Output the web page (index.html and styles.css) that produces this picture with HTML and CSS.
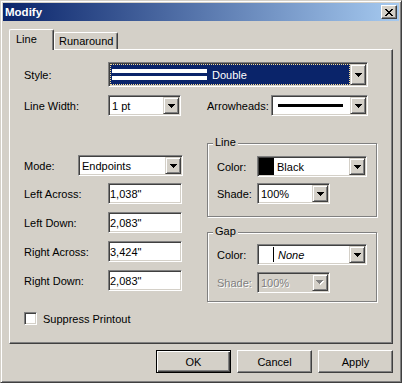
FILE: index.html
```html
<!DOCTYPE html>
<html lang="en">
<head>
    <meta charset="UTF-8">
    <meta name="viewport" content="width=device-width, initial-scale=1.0">
    <title>Modify</title>
    <link rel="stylesheet" href="styles.css">
</head>
<body>
    <div class="window">
        <div class="titlebar">
            <span class="title">Modify</span>
            <div class="close-btn">
                <svg width="8" height="7" viewBox="0 0 8 7"><path d="M0 0h2v1H0z M6 0h2v1H6z M1 1h2v1H1z M5 1h2v1H5z M2 2h4v1H2z M3 3h2v1H3z M2 4h4v1H2z M1 5h2v1H1z M5 5h2v1H5z M0 6h2v1H0z M6 6h2v1H6z" fill="#000"/></svg>
            </div>
        </div>

        <div class="content">
            <div class="tabs">
                <div class="tab active">Line</div>
                <div class="tab">Runaround</div>
            </div>

            <div class="panel">
                <div class="row row-style">
                    <span class="lbl lbl-84">Style:</span>
                    <div class="combo combo-tall w260">
                        <div class="combo-val focused">
                            <span class="double-line"><i></i><i></i></span>
                            <span class="val-text">Double</span>
                        </div>
                        <div class="drop"><svg width="7" height="4" viewBox="0 0 7 4"><path d="M0 0h7v1H0z M1 1h5v1H1z M2 2h3v1H2z M3 3h1v1H3z"/></svg></div>
                    </div>
                </div>

                <div class="row row-width">
                    <span class="lbl lbl-84">Line Width:</span>
                    <div class="combo w73">
                        <div class="combo-val">1 pt</div>
                        <div class="drop"><svg width="7" height="4" viewBox="0 0 7 4"><path d="M0 0h7v1H0z M1 1h5v1H1z M2 2h3v1H2z M3 3h1v1H3z"/></svg></div>
                    </div>
                    <span class="lbl lbl-arrow">Arrowheads:</span>
                    <div class="combo w97">
                        <div class="combo-val"><span class="arrow-line"></span></div>
                        <div class="drop"><svg width="7" height="4" viewBox="0 0 7 4"><path d="M0 0h7v1H0z M1 1h5v1H1z M2 2h3v1H2z M3 3h1v1H3z"/></svg></div>
                    </div>
                </div>

                <div class="lower">
                    <div class="col-left">
                        <div class="row row-mode">
                            <span class="lbl lbl-54">Mode:</span>
                            <div class="combo w105">
                                <div class="combo-val">Endpoints</div>
                                <div class="drop"><svg width="7" height="4" viewBox="0 0 7 4"><path d="M0 0h7v1H0z M1 1h5v1H1z M2 2h3v1H2z M3 3h1v1H3z"/></svg></div>
                            </div>
                        </div>
                        <div class="row">
                            <span class="lbl lbl-84">Left Across:</span>
                            <input class="field" type="text" value='1,038"'>
                        </div>
                        <div class="row">
                            <span class="lbl lbl-84">Left Down:</span>
                            <input class="field" type="text" value='2,083"'>
                        </div>
                        <div class="row">
                            <span class="lbl lbl-84">Right Across:</span>
                            <input class="field" type="text" value='3,424"'>
                        </div>
                        <div class="row">
                            <span class="lbl lbl-84">Right Down:</span>
                            <input class="field" type="text" value='2,083"'>
                        </div>
                    </div>

                    <div class="col-right">
                        <div class="group group-line">
                            <span class="legend">Line</span>
                            <div class="row">
                                <span class="lbl lbl-40">Color:</span>
                                <div class="combo w110">
                                    <div class="combo-val swatch-val">
                                        <span class="swatch black"></span>
                                        <span class="val-text">Black</span>
                                    </div>
                                    <div class="drop"><svg width="7" height="4" viewBox="0 0 7 4"><path d="M0 0h7v1H0z M1 1h5v1H1z M2 2h3v1H2z M3 3h1v1H3z"/></svg></div>
                                </div>
                            </div>
                            <div class="row">
                                <span class="lbl lbl-40">Shade:</span>
                                <div class="combo w73">
                                    <div class="combo-val">100%</div>
                                    <div class="drop"><svg width="7" height="4" viewBox="0 0 7 4"><path d="M0 0h7v1H0z M1 1h5v1H1z M2 2h3v1H2z M3 3h1v1H3z"/></svg></div>
                                </div>
                            </div>
                        </div>

                        <div class="group group-gap">
                            <span class="legend">Gap</span>
                            <div class="row">
                                <span class="lbl lbl-40">Color:</span>
                                <div class="combo w110">
                                    <div class="combo-val swatch-val">
                                        <span class="swatch none"></span>
                                        <span class="val-text none-text">None</span>
                                    </div>
                                    <div class="drop"><svg width="7" height="4" viewBox="0 0 7 4"><path d="M0 0h7v1H0z M1 1h5v1H1z M2 2h3v1H2z M3 3h1v1H3z"/></svg></div>
                                </div>
                            </div>
                            <div class="row">
                                <span class="lbl lbl-40 disabled">Shade:</span>
                                <div class="combo w73 combo-disabled">
                                    <div class="combo-val">100%</div>
                                    <div class="drop"><svg width="8" height="5" viewBox="0 0 8 5"><path d="M1 1h7v1H1z M2 2h5v1H2z M3 3h3v1H3z M4 4h1v1H4z" fill="#fff"/><path d="M0 0h7v1H0z M1 1h5v1H1z M2 2h3v1H2z M3 3h1v1H3z" fill="#808080"/></svg></div>
                                </div>
                            </div>
                        </div>
                    </div>
                </div>

                <div class="row row-check">
                    <span class="check"></span>
                    <span>Suppress Printout</span>
                </div>
            </div>

            <div class="buttons">
                <div class="btn default">OK</div>
                <div class="btn">Cancel</div>
                <div class="btn">Apply</div>
            </div>
        </div>
    </div>
</body>
</html>
```

FILE: styles.css
```css
* {
    box-sizing: border-box;
}
html, body {
    margin: 0;
}
body {
    font-family: "Liberation Sans", Arial, sans-serif;
    font-size: 11px;
    color: #000;
    background: #d4d0c8;
}

/* window frame */
.window {
    width: 402px;
    height: 383px;
    background: #d4d0c8;
    border: 1px solid;
    border-color: #d4d0c8 #404040 #404040 #d4d0c8;
    box-shadow: inset 1px 1px 0 #fff, inset -1px -1px 0 #808080;
    padding: 2px;
}
.titlebar {
    height: 18px;
    display: flex;
    align-items: center;
    justify-content: space-between;
    padding: 0 2px 0 2px;
    background: linear-gradient(to right, #0a246a, #a6caf0);
}
.title {
    color: #fff;
    font-weight: bold;
    font-size: 11.5px;
}
.close-btn {
    width: 16px;
    height: 14px;
    display: flex;
    align-items: center;
    justify-content: center;
    background: #d4d0c8;
    border: 1px solid;
    border-color: #fff #404040 #404040 #fff;
    box-shadow: inset -1px -1px 0 #808080;
}

.content {
    padding: 8px 6px 0 6px;
}

/* tabs */
.tabs {
    height: 20px;
    display: flex;
    align-items: flex-end;
}
.tab {
    position: relative;
    height: 17px;
    width: 64px;
    padding: 2px 0 0 4px;
    background: #d4d0c8;
    border-top: 1px solid #fff;
    border-left: 1px solid #fff;
    border-right: 1px solid #404040;
    border-radius: 2px 2px 0 0;
    box-shadow: inset -1px 0 0 #808080;
}
.tab.active {
    z-index: 1;
    width: 45px;
    height: 21px;
    margin-bottom: -1px;
    padding: 3px 0 0 6px;
}

.panel {
    width: 384px;
    height: 295px;
    border: 1px solid;
    border-color: #fff #404040 #404040 #fff;
    box-shadow: inset -1px -1px 0 #808080;
    padding: 12px 0 0 14px;
}

/* rows and labels */
.row {
    display: flex;
    align-items: center;
    height: 21px;
}
.row-style {
    height: 25px;
}
.row-width {
    margin-top: 8px;
}
.lbl {
    flex: none;
    white-space: nowrap;
}
.lbl-84 { width: 84px; }
.lbl-54 { width: 54px; }
.lbl-40 { width: 40px; }
.lbl-arrow {
    width: 64px;
    margin-left: 26px;
}
.disabled {
    color: #808080;
    text-shadow: 1px 1px 0 #fff;
}

/* combo boxes */
.combo {
    flex: none;
    display: flex;
    height: 21px;
    background: #fff;
    border: 1px solid;
    border-color: #808080 #fff #fff #808080;
    padding: 1px;
    box-shadow: inset 1px 1px 0 #404040, inset -1px -1px 0 #d4d0c8;
}
.combo-tall { height: 25px; }
.w260 { width: 260px; }
.w110 { width: 110px; }
.w105 { width: 105px; }
.w97 { width: 97px; }
.w73 { width: 73px; }

.combo-val {
    flex: 1;
    display: flex;
    align-items: center;
    padding-left: 2px;
    overflow: hidden;
    white-space: nowrap;
}
.combo-val.focused {
    background: #0a246a;
    color: #fff;
    border: 1px dotted #f5db95;
    padding-left: 1px;
}
.double-line {
    display: flex;
    flex-direction: column;
    gap: 3px;
    width: 95px;
}
.double-line i {
    display: block;
    height: 4px;
    background: #fff;
}
.val-text {
    margin-left: 5px;
}
.arrow-line {
    display: block;
    width: 65px;
    height: 3px;
    margin-left: 3px;
    background: #000;
}
.swatch-val {
    padding-left: 0;
}
.swatch {
    flex: none;
    width: 15px;
}
.swatch.black {
    height: 100%;
    background: #000;
}
.swatch.none {
    height: 15px;
    border-right: 1px solid #000;
}
.swatch-val .val-text {
    margin-left: 3px;
}
.swatch-val .none-text {
    margin-left: 4px;
    font-style: italic;
}
.drop {
    flex: none;
    width: 16px;
    display: flex;
    align-items: center;
    justify-content: center;
    background: #d4d0c8;
    border: 1px solid;
    border-color: #d4d0c8 #404040 #404040 #d4d0c8;
    box-shadow: inset 1px 1px 0 #fff, inset -1px -1px 0 #808080;
}
.combo-disabled {
    background: #d4d0c8;
}
.combo-disabled .combo-val {
    color: #808080;
    text-shadow: 1px 1px 0 #fff;
}

/* text fields */
.field {
    width: 74px;
    height: 21px;
    margin: 0;
    padding: 0 0 0 1px;
    font: inherit;
    color: #000;
    background: #fff;
    border: 1px solid;
    border-color: #808080 #fff #fff #808080;
    box-shadow: inset 1px 1px 0 #404040, inset -1px -1px 0 #d4d0c8;
    outline: none;
}

/* lower half */
.lower {
    display: flex;
    gap: 24px;
    margin-top: 27px;
    height: 159px;
}
.col-left {
    width: 159px;
    padding-top: 12px;
    display: flex;
    flex-direction: column;
    gap: 8px;
}
.row-mode {
    margin-bottom: -1px;
}
.col-right {
    width: 170px;
}
.group {
    position: relative;
    border: 1px solid #808080;
    box-shadow: inset 1px 1px 0 #fff, 1px 1px 0 #fff;
    padding: 12px 0 0 9px;
    display: flex;
    flex-direction: column;
    gap: 6px;
}
.group-line {
    height: 74px;
}
.group-gap {
    height: 70px;
    margin-top: 15px;
    padding-top: 11px;
    gap: 7px;
}
.legend {
    position: absolute;
    top: -8px;
    left: 5px;
    padding: 0 2px;
    line-height: 13px;
    background: #d4d0c8;
}

/* checkbox */
.row-check {
    margin-top: 10px;
    height: 13px;
    gap: 6px;
}
.check {
    width: 13px;
    height: 13px;
    background: #fff;
    border: 1px solid;
    border-color: #808080 #fff #fff #808080;
    box-shadow: inset 1px 1px 0 #404040, inset -1px -1px 0 #d4d0c8;
}

/* dialog buttons */
.buttons {
    display: flex;
    justify-content: flex-end;
    gap: 6px;
    margin-top: 6px;
}
.btn {
    width: 75px;
    height: 23px;
    display: flex;
    align-items: center;
    justify-content: center;
    background: #d4d0c8;
    border: 1px solid;
    border-color: #fff #404040 #404040 #fff;
    box-shadow: inset -1px -1px 0 #808080;
}
.btn.default {
    border-color: #000;
    box-shadow: inset 1px 1px 0 #fff, inset -1px -1px 0 #404040, inset -2px -2px 0 #808080;
}
```
